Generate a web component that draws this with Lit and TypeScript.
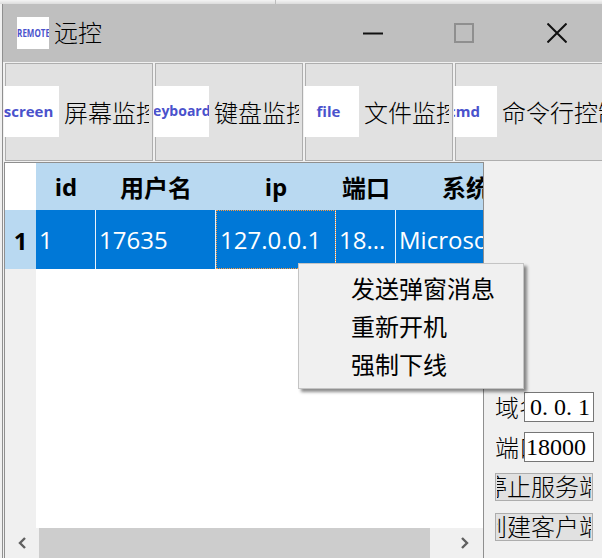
import { LitElement, html, css } from "lit";
import { customElement } from "lit/decorators.js";

// iconWidth: the 4th button overflows, so its picture is cut on the left
const TOOLS = [
  { icon: "screen", label: "屏幕监控", iconWidth: 55, pad: 6 },
  { icon: "keyboard", label: "键盘监控", iconWidth: 55, pad: 8, size: 14 },
  { icon: "file", label: "文件监控", iconWidth: 55, pad: 6 },
  { icon: "cmd", label: "命令行控制", iconWidth: 43, pad: 0, cut: 17 },
];

const COLS = [
  { name: "id", value: "1", width: 60 },
  { name: "用户名", value: "17635", width: 120 },
  { name: "ip", value: "127.0.0.1", width: 120, current: true },
  { name: "端口", value: "18...", width: 60 },
  { name: "系统", value: "Microsoft", width: 140 },
];

@customElement("app-root")
export class AppRoot extends LitElement {
  static override styles = css`
    :host {
      display: block;
      width: 602px;
      height: 558px;
      overflow: hidden;
      position: relative;
      background: #f0f0f0;
      font-family: "Liberation Sans", "Noto Sans CJK SC", sans-serif;
      color: #000;
    }
    .behind {
      height: 4px;
      background: linear-gradient(#f4f4f4, #dcdcdc);
      display: flex;
    }
    .behind-line {
      margin-left: 275px;
      width: 1px;
      background: #bdbdbd;
    }
    .window {
      margin-left: 2px;
      height: 554px;
      border-left: 1px solid #8f8f8f;
      display: flex;
      flex-direction: column;
      background: #f0f0f0;
    }
    .titlebar {
      height: 58px;
      flex: none;
      background: #bfbfbf;
      display: flex;
      align-items: center;
      padding-left: 14px;
    }
    .app-icon {
      width: 32px;
      height: 32px;
      background: #fff;
      display: flex;
      align-items: center;
      justify-content: center;
      overflow: hidden;
      color: #4a52cc;
      font: bold 10px "Open Sans", sans-serif;
      flex: none;
    }
    .app-icon span {
      transform: scaleX(0.8);
    }
    .title {
      font-size: 24px;
      font-weight: 300;
      margin-left: 5px;
      padding-bottom: 3px;
      flex: 1;
    }
    .win-btn {
      flex: none;
      height: 58px;
      display: flex;
      align-items: center;
      justify-content: center;
    }
    .win-min {
      width: 86px;
    }
    .win-max {
      width: 96px;
    }
    .win-close {
      width: 90px;
    }
    .toolbar {
      flex: none;
      height: 99px;
      display: flex;
      gap: 2px;
      padding: 1px 0 0 2px;
      box-sizing: border-box;
    }
    .tool {
      flex: none;
      width: 148px;
      height: 98px;
      box-sizing: border-box;
      border: 1px solid #aeaeae;
      background: #e1e1e1;
      display: flex;
      align-items: center;
      font-size: 24px;
      font-weight: 300;
      white-space: nowrap;
    }
    .tool-icon {
      flex: none;
      box-sizing: border-box;
      height: 51px;
      margin: 0 0 1px -2px;
      padding-bottom: 2px;
      background: #fff;
      display: flex;
      align-items: center;
      justify-content: center;
      overflow: hidden;
      color: #4a52cc;
      font: bold 15px "Open Sans", sans-serif;
    }
    .tool-text {
      flex: 1;
      min-width: 0;
      margin: 0 3px 0 5px;
      padding-bottom: 2px;
      overflow: hidden;
    }
    .tool:last-child .tool-text {
      margin-right: 0;
    }
    .main {
      flex: 1;
      display: flex;
      min-height: 0;
      padding-top: 1px;
      padding-left: 1px;
    }
    .table {
      width: 480px;
      flex: none;
      box-sizing: border-box;
      border: 1px solid #8f8f8f;
      border-bottom: 0;
      background: #fff;
      display: flex;
      flex-direction: column;
      position: relative;
      overflow: hidden;
    }
    .row {
      display: flex;
      flex: none;
    }
    .corner {
      flex: none;
      width: 31px;
      background: #fff;
    }
    .head {
      height: 47px;
      background: #b9d9f1;
    }
    .hcell {
      flex: none;
      box-sizing: border-box;
      display: flex;
      align-items: center;
      justify-content: center;
      font-family: "Open Sans", "Noto Sans CJK SC", sans-serif;
      font-size: 24px;
      font-weight: bold;
      white-space: nowrap;
      overflow: hidden;
    }
    .body-row {
      height: 59px;
      background: #0078d7;
    }
    .row-num {
      flex: none;
      width: 31px;
      padding-top: 2px;
      box-sizing: border-box;
      background: #b9d9f1;
      display: flex;
      align-items: center;
      justify-content: center;
      font-family: "Open Sans", sans-serif;
      font-size: 24px;
      font-weight: bold;
    }
    .cell {
      flex: none;
      box-sizing: border-box;
      color: #fff;
      font-family: "Open Sans", "Noto Sans CJK SC", sans-serif;
      font-size: 24px;
      display: flex;
      align-items: center;
      padding-left: 3px;
      border-right: 1px solid #e8f2fb;
      white-space: nowrap;
      overflow: hidden;
    }
    .cell.current {
      padding-left: 4px;
      outline: 1px dotted #ff9a3c;
      outline-offset: -1px;
    }
    .filler {
      flex: 1;
      display: flex;
      min-height: 0;
    }
    .gutter {
      flex: none;
      width: 31px;
      background: #f0f0f0;
    }
    .scrollbar {
      flex: none;
      height: 30px;
      display: flex;
      align-items: center;
      background: #f0f0f0;
    }
    .sb-arrow {
      flex: none;
      width: 34px;
      height: 30px;
      display: flex;
      align-items: center;
      justify-content: center;
    }
    .sb-arrow.end {
      width: 36px;
      margin-left: auto;
    }
    .sb-thumb {
      flex: none;
      width: 391px;
      height: 30px;
      background: #cdcdcd;
    }
    .side {
      flex: 1;
      display: flex;
      flex-direction: column;
      padding: 230px 0 0 11px;
      min-width: 0;
    }
    .field {
      display: flex;
      align-items: center;
      height: 30px;
      margin-bottom: 10px;
      font-size: 24px;
      font-weight: 300;
    }
    .field + .side-btn {
      margin-top: 1px;
    }
    .field-label {
      flex: none;
      width: 29px;
      padding-bottom: 2px;
      overflow: hidden;
      white-space: nowrap;
    }
    .field-input {
      flex: none;
      width: 70px;
      height: 30px;
      box-sizing: border-box;
      border: 1px solid #767676;
      background: #fff;
      overflow: hidden;
      display: flex;
      align-items: center;
      white-space: nowrap;
      font-family: "Liberation Serif", serif;
      font-size: 24px;
      font-weight: normal;
    }
    .field-input.scrolled {
      justify-content: flex-end;
      padding-right: 3px;
    }
    .field-input.plain {
      padding-left: 1px;
    }
    .field-view {
      width: 60px;
      flex: none;
      overflow: hidden;
      display: flex;
      justify-content: flex-end;
    }
    .ch {
      flex: none;
      width: 12px;
    }
    .side-btn {
      width: 98px;
      height: 28px;
      box-sizing: border-box;
      border: 1px solid #adadad;
      background: #e1e1e1;
      padding: 0 1px;
      display: flex;
      font-size: 24px;
      font-weight: 300;
      margin-bottom: 12px;
    }
    .side-btn-text {
      flex: 1;
      min-width: 0;
      box-sizing: border-box;
      padding: 0 2px 3px 0;
      overflow: hidden;
      display: flex;
      justify-content: center;
      align-items: center;
      white-space: nowrap;
    }
    .menu {
      position: absolute;
      left: 298px;
      top: 263px;
      width: 226px;
      height: 126px;
      box-sizing: border-box;
      background: #f0f0f0;
      border: 1px solid #c4c4c4;
      box-shadow: 3px 3px 3px rgba(0, 0, 0, 0.45);
      padding: 7px 0 0 52px;
      font-size: 24px;
    }
    .menu-item {
      height: 38px;
      line-height: 38px;
      white-space: nowrap;
    }
  `;

  override render() {
    return html`
      <div class="behind"><div class="behind-line"></div></div>
      <div class="window">
        <div class="titlebar">
          <div class="app-icon"><span>REMOTE</span></div>
          <div class="title">远控</div>
          <div class="win-btn win-min">
            <svg width="20" height="20" viewBox="0 0 20 20">
              <path d="M0 10.5H20" stroke="#111" stroke-width="2" />
            </svg>
          </div>
          <div class="win-btn win-max">
            <svg width="20" height="20" viewBox="0 0 20 20">
              <rect x="1" y="1" width="18" height="18" fill="none" stroke="#8f8f8f" stroke-width="2" />
            </svg>
          </div>
          <div class="win-btn win-close">
            <svg width="20" height="20" viewBox="0 0 20 20">
              <path d="M0.5 0.5L19.5 19.5M19.5 0.5L0.5 19.5" stroke="#111" stroke-width="2" />
            </svg>
          </div>
        </div>
        <div class="toolbar">
          ${TOOLS.map(
            (t) => html`<div class="tool">
              <div
                class="tool-icon"
                style="width:${t.iconWidth}px;padding-right:${t.pad}px;${t.size ? `font-size:${t.size}px;` : ""}${t.cut
                  ? `justify-content:flex-end;padding-right:${t.cut}px;`
                  : ""}"
              >
                ${t.icon}
              </div>
              <div class="tool-text">${t.label}</div>
            </div>`
          )}
        </div>
        <div class="main">
          <div class="table">
            <div class="row head">
              <div class="corner"></div>
              ${COLS.map((c) => html`<div class="hcell" style="width:${c.width}px">${c.name}</div>`)}
            </div>
            <div class="row body-row">
              <div class="row-num">1</div>
              ${COLS.map(
                (c) =>
                  html`<div class="cell ${c.current ? "current" : ""}" style="width:${c.width}px">${c.value}</div>`
              )}
            </div>
            <div class="filler"><div class="gutter"></div></div>
            <div class="scrollbar">
              <div class="sb-arrow">
                <svg width="10" height="12" viewBox="0 0 10 12">
                  <path d="M8 1L3 6L8 11" fill="none" stroke="#606060" stroke-width="2.4" />
                </svg>
              </div>
              <div class="sb-thumb"></div>
              <div class="sb-arrow end">
                <svg width="10" height="12" viewBox="0 0 10 12">
                  <path d="M2 1L7 6L2 11" fill="none" stroke="#606060" stroke-width="2.4" />
                </svg>
              </div>
            </div>
          </div>
          <div class="side">
            <div class="field">
              <div class="field-label">域名</div>
              <div class="field-input scrolled">
                <div class="field-view">${[..."127.0.0.1"].map((c) => html`<span class="ch">${c}</span>`)}</div>
              </div>
            </div>
            <div class="field">
              <div class="field-label">端口</div>
              <div class="field-input plain">18000</div>
            </div>
            <div class="side-btn"><div class="side-btn-text">停止服务端</div></div>
            <div class="side-btn"><div class="side-btn-text">创建客户端</div></div>
          </div>
        </div>
      </div>
      <div class="menu">
        <div class="menu-item">发送弹窗消息</div>
        <div class="menu-item">重新开机</div>
        <div class="menu-item">强制下线</div>
      </div>
    `;
  }
}

declare global {
  interface HTMLElementTagNameMap {
    "app-root": AppRoot;
  }
}
